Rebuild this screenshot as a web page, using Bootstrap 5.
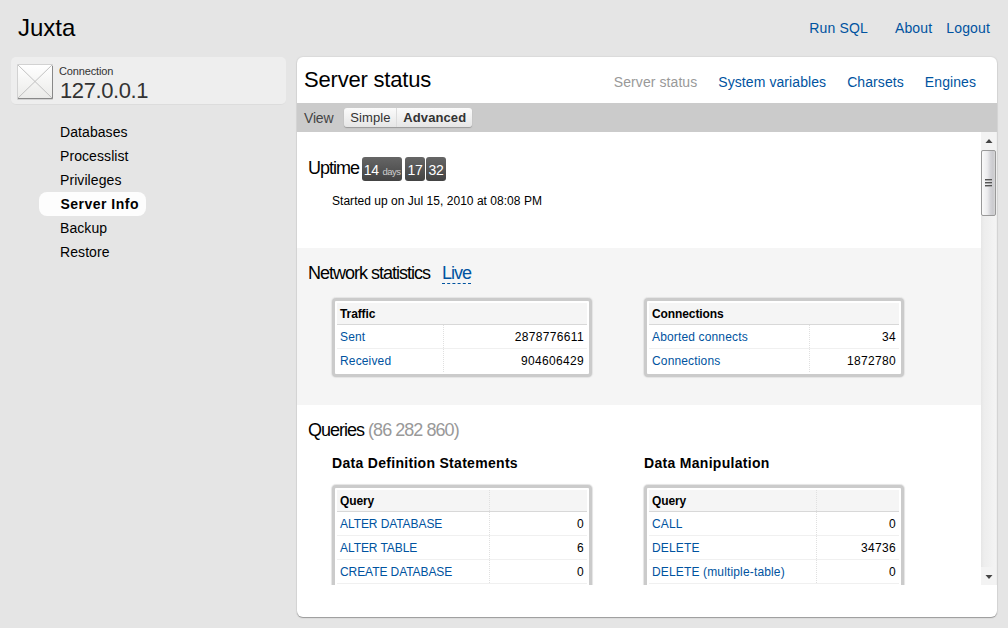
<!DOCTYPE html>
<html lang="en">
<head>
<meta charset="utf-8">
<title>Juxta</title>
<link href="https://cdn.jsdelivr.net/npm/bootstrap@5.3.0/dist/css/bootstrap.min.css" rel="stylesheet">
<style>
body{font-family:"Liberation Sans",Arial,sans-serif;font-size:14px;line-height:24px;color:#000;background:#e5e5e5;height:628px}
a{color:#0053a0;text-decoration:none}
.topbar{height:57px;padding:0 18px}
.brand{font-size:24px;line-height:56px}
.top-links{line-height:57px;letter-spacing:.15px}
.run-link{margin-right:27px}
.about-link{margin-right:14px}
.sidebar{width:286px;padding-left:11px}
.server{height:48px;background:#eee;border-radius:5px;border-bottom:1px solid #dcdcdc;padding:7px 0 0 6px;color:#333}
.server-text{margin:1px 0 0 6px}
.server-label{font-size:11px;line-height:12px;letter-spacing:-.15px}
.server-ip{font-size:22px;line-height:27px;letter-spacing:-.4px;padding-left:1px}
.menu{padding:15px 0 0 28px}
.menu a{color:#000;padding:0 7px 0 21px;border-radius:8px;letter-spacing:.08px}
.menu a.active{background:#fdfdfd;font-weight:700;letter-spacing:.48px;padding-left:21.5px}
.main-panel{width:700px;height:560px;margin-left:11px;background:#fff;border-radius:6px;box-shadow:0 1px 1px #999,0 0 1px 1px #dadada}
.panel-head{height:46px;padding:0 21px 0 7px}
.panel-title{font-size:22px;line-height:46px;letter-spacing:-.2px}
.tabs{gap:21px;line-height:51px;letter-spacing:.08px}
.tabs .current{color:#999}
.toolbar{height:29px;background:#cbcbcb;color:#444;padding-left:7px;letter-spacing:-.2px}
.switch{width:128px;height:19px;margin-left:11px;border-radius:3px;background:linear-gradient(#fbfbfb,#e6e6e6);box-shadow:0 1px 1px #999;line-height:19px;color:#333;font-size:13px;letter-spacing:.1px}
.switch span:first-child{width:53px;padding-left:6px;border-right:1px solid #dcdcdc}
.switch span:last-child{padding-left:6px;font-weight:700;letter-spacing:.1px}
.view{height:453px}
.sect{padding-left:11px}
.uptime{height:116px;padding-top:24px}
.net{height:157px;background:#f5f5f5;padding-top:13px}
.queries{padding-top:13px}
.h{font-size:18px;letter-spacing:-1px;line-height:24px}
.live{border-bottom:1px dashed #0053a0;margin-left:12px;height:23px}
.tick{height:24px;margin-top:1px;border-radius:3px;background:linear-gradient(#666,#434343);color:#fff;line-height:26px;text-align:center;width:20px;letter-spacing:-.2px;white-space:nowrap}
.tick-days{width:40px;margin:1px 3px 0 3px}
.tick-days small{font-size:9.5px;color:#ccc;letter-spacing:-.6px}
.tick-min{margin-left:1px}
.started{font-size:12px;line-height:16px;padding:12px 0 0 24px;letter-spacing:.03px}
.cols{gap:52px;padding-left:24px}
.net .cols{padding-top:13px}
.queries .cols{padding-top:10px}
.total{color:#999;letter-spacing:-.95px}
.h2x{font-size:14px;font-weight:700;letter-spacing:.3px;line-height:22px;margin-bottom:11px}
.box{width:260px;border:3px solid #cbcbcb;border-radius:4px;padding:2px 2px 1px;background:#fff;font-size:12px;box-shadow:0 0 1px 1px #e4e4e4}
.trow{height:24px;border-bottom:1px solid #f0f0f0;line-height:25px}
.trow:last-child{border-bottom-color:transparent}
.thead-row{height:22px;background:#f5f5f5;border-bottom:1px solid #d8d8d8;line-height:22px;font-weight:700}
.key{padding-left:3px;letter-spacing:.15px}
.thead-row .key{letter-spacing:-.1px}
.caps{letter-spacing:-.08px}
.val{padding-right:3px;text-align:right;letter-spacing:.33px;border-left:1px dotted #e0e0e0}
.k106{width:106px}.k160{width:160px}.k152{width:152px}.k167{width:167px}
.sbar{width:16px;background:linear-gradient(90deg,#e6e6e6,#ededed 3px,#f4f4f4);border-right:1px solid #eee}
.sbar-btn{height:18px;background:#f3f3f3}
.sbar-thumb{height:66px;width:15px;border:1px solid #999;border-radius:2px;background:linear-gradient(90deg,#fafafa,#ececee 40%,#d4d4d8 65%,#cacace 85%,#d8d8d8)}
</style>
</head>
<body class="overflow-hidden">
<header class="topbar d-flex justify-content-between">
  <div class="brand">Juxta</div>
  <nav class="top-links d-flex"><a href="#" class="run-link">Run SQL</a><a href="#" class="about-link">About</a><a href="#">Logout</a></nav>
</header>
<div class="d-flex">
  <aside class="sidebar flex-shrink-0">
    <div class="server d-flex">
      <svg width="36" height="36" viewBox="0 0 36 36"><defs><linearGradient id="g" x2="0" y2="1"><stop stop-color="#fff"/><stop offset="1" stop-color="#ebebe9"/></linearGradient></defs><path d="M.5 .5h35v35H.5z" fill="#e9e9e9" stroke="#d2d2d2"/><path d="M35.5 2v32.5H1" fill="none" stroke="#888"/><path d="M1 1h34v33H1z" fill="url(#g)"/><path d="M1 1l34 33M35 1L1 34" stroke="#bbb" stroke-width=".9"/></svg>
      <div class="server-text"><div class="server-label">Connection</div><div class="server-ip">127.0.0.1</div></div>
    </div>
    <nav class="menu d-flex flex-column align-items-start"><a href="#">Databases</a><a href="#">Processlist</a><a href="#">Privileges</a><a href="#" class="active">Server Info</a><a href="#">Backup</a><a href="#">Restore</a></nav>
  </aside>
  <main class="main-panel flex-shrink-0">
    <div class="panel-head d-flex justify-content-between">
      <div class="panel-title">Server status</div>
      <nav class="tabs d-flex"><span class="current">Server status</span><a href="#">System variables</a><a href="#">Charsets</a><a href="#">Engines</a></nav>
    </div>
    <div class="toolbar d-flex align-items-center"><span>View</span><div class="switch d-flex"><span>Simple</span><span>Advanced</span></div></div>
    <div class="view d-flex overflow-hidden">
      <div class="flex-grow-1 overflow-hidden">
        <section class="sect uptime">
          <div class="d-flex"><span class="h">Uptime</span><span class="tick tick-days">14 <small>days</small></span><span class="tick">17</span><span class="tick tick-min">32</span></div>
          <div class="started">Started up on Jul 15, 2010 at 08:08 PM</div>
        </section>
        <section class="sect net">
          <div class="d-flex align-items-start"><span class="h">Network statistics</span><a href="#" class="h live">Live</a></div>
          <div class="cols d-flex">
            <div class="box">
              <div class="trow thead-row"><div class="key">Traffic</div></div>
              <div class="trow d-flex"><a class="key k106" href="#">Sent</a><span class="val flex-grow-1">2878776611</span></div>
              <div class="trow d-flex"><a class="key k106" href="#">Received</a><span class="val flex-grow-1">904606429</span></div>
            </div>
            <div class="box">
              <div class="trow thead-row"><div class="key">Connections</div></div>
              <div class="trow d-flex"><a class="key k160" href="#">Aborted connects</a><span class="val flex-grow-1">34</span></div>
              <div class="trow d-flex"><a class="key k160" href="#">Connections</a><span class="val flex-grow-1">1872780</span></div>
            </div>
          </div>
        </section>
        <section class="sect queries">
          <div class="h">Queries <span class="total">(86 282 860)</span></div>
          <div class="cols d-flex">
            <div><div class="h2x">Data Definition Statements</div>
              <div class="box">
                <div class="trow thead-row d-flex"><span class="key k152">Query</span><span class="val flex-grow-1"></span></div>
                <div class="trow d-flex"><a class="key caps k152" href="#">ALTER DATABASE</a><span class="val flex-grow-1">0</span></div>
                <div class="trow d-flex"><a class="key caps k152" href="#">ALTER TABLE</a><span class="val flex-grow-1">6</span></div>
                <div class="trow d-flex"><a class="key caps k152" href="#">CREATE DATABASE</a><span class="val flex-grow-1">0</span></div>
                <div class="trow"></div>
              </div>
            </div>
            <div><div class="h2x">Data Manipulation</div>
              <div class="box">
                <div class="trow thead-row d-flex"><span class="key k167">Query</span><span class="val flex-grow-1"></span></div>
                <div class="trow d-flex"><a class="key k167" href="#">CALL</a><span class="val flex-grow-1">0</span></div>
                <div class="trow d-flex"><a class="key k167" href="#">DELETE</a><span class="val flex-grow-1">34736</span></div>
                <div class="trow d-flex"><a class="key k167" href="#">DELETE (multiple-table)</a><span class="val flex-grow-1">0</span></div>
                <div class="trow"></div>
              </div>
            </div>
          </div>
        </section>
      </div>
      <div class="sbar flex-shrink-0 d-flex flex-column">
        <div class="sbar-btn d-flex"><svg width="15" height="18"><path d="M4.500 11L8 7l3.500 4z" fill="#444"/></svg></div>
        <div class="sbar-thumb d-flex align-items-center justify-content-center"><svg width="8" height="9"><path d="M0 .5h7M0 3.500h7M0 6.500h7" stroke="#555"/><path d="M0 1.500h7M0 4.500h7M0 7.500h7" stroke="#aaa"/></svg></div>
        <div class="sbar-btn mt-auto d-flex"><svg width="15" height="18"><path d="M4.500 8h7L8 12z" fill="#444"/></svg></div>
      </div>
    </div>
  </main>
</div>
<script src="https://cdn.jsdelivr.net/npm/bootstrap@5.3.0/dist/js/bootstrap.bundle.min.js"></script>
</body>
</html>
